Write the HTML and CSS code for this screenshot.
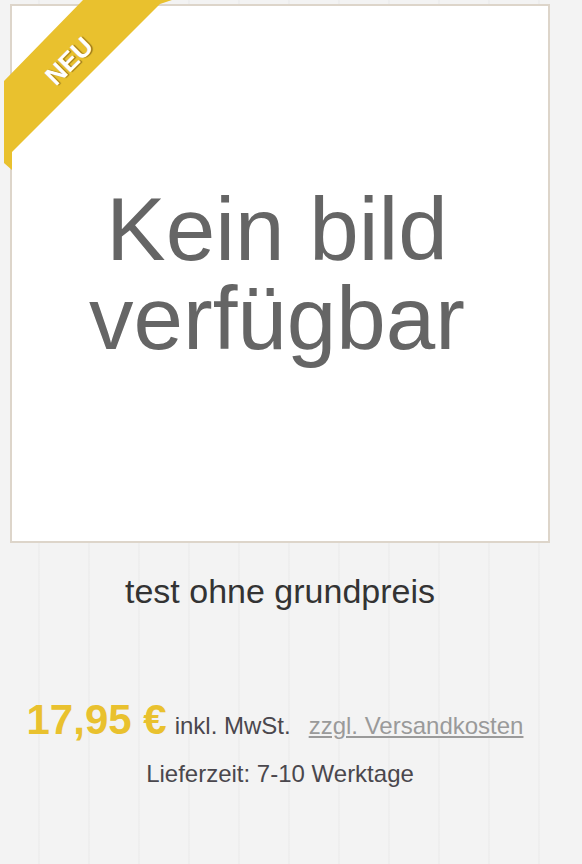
FILE: index.html
```html
<!DOCTYPE html>
<html lang="de">
<head>
<meta charset="utf-8">
<title>test ohne grundpreis</title>
<link rel="stylesheet" href="styles.css">
</head>
<body>
<div class="page">
  <div class="card">
    <div class="image-box">
      <svg class="ribbon" viewBox="0 0 180 175" width="180" height="175" aria-hidden="true">
        <polygon points="83,0 172,0 160,4 12,152 12,170 4,163 4,81" fill="#e9c12e"/>
      </svg>
      <span class="ribbon-label">NEU</span>
      <div class="placeholder">Kein bild<br>verfügbar</div>
    </div>
    <h2 class="title">test ohne grundpreis</h2>
    <div class="price-row">
      <span class="price">17,95 €</span>
      <span class="tax">inkl. MwSt.</span>
      <a class="shipping" href="#">zzgl. Versandkosten</a>
    </div>
    <div class="delivery">Lieferzeit: 7-10 Werktage</div>
  </div>
</div>
</body>
</html>
```
FILE: styles.css
```css
html, body {
  margin: 0;
  padding: 0;
}
body {
  min-height: 864px;
  background-color: #f3f3f3;
  background-image: repeating-linear-gradient(90deg, rgba(255,255,255,0) 0px, rgba(255,255,255,0) 38px, rgba(0,0,0,0.018) 38px, rgba(0,0,0,0.018) 40px, rgba(255,255,255,0) 40px, rgba(255,255,255,0) 50px);
  font-family: "Liberation Sans", Arial, sans-serif;
}
.page {
  padding: 4px 0 0 10px;
}
.card {
  width: 540px;
}
.image-box {
  position: relative;
  box-sizing: border-box;
  height: 539px;
  border: 2px solid #ddd5ca;
  background: #fff;
  display: flex;
  align-items: center;
  justify-content: center;
}
.ribbon {
  position: absolute;
  left: -12px;
  top: -6px;
  display: block;
}
.ribbon-label {
  position: absolute;
  left: 57px;
  top: 55px;
  transform: translate(-50%, -50%) rotate(-45deg);
  font-size: 26px;
  line-height: 26px;
  font-weight: 700;
  color: #fff;
  text-shadow: 1px 1px 1px rgba(0,0,0,0.45);
}
.placeholder {
  font-size: 89px;
  line-height: 89px;
  color: #656565;
  text-align: center;
  padding-right: 6px;
}
.title {
  margin: 28px 0 0;
  font-size: 34px;
  line-height: 40px;
  font-weight: 400;
  color: #333;
  text-align: center;
}
.price-row {
  display: flex;
  justify-content: center;
  align-items: baseline;
  margin-top: 85px;
  padding-right: 10px;
}
.price {
  font-size: 42px;
  line-height: 48px;
  font-weight: 700;
  color: #e9c12e;
  margin-right: 8px;
}
.tax {
  font-size: 24px;
  line-height: 48px;
  color: #4a474d;
  margin-right: 18px;
}
.shipping {
  font-size: 24px;
  line-height: 48px;
  color: #9a9a9a;
  text-decoration: underline;
}
.delivery {
  margin-top: 9px;
  font-size: 24px;
  line-height: 30px;
  color: #4a474d;
  text-align: center;
}
```
